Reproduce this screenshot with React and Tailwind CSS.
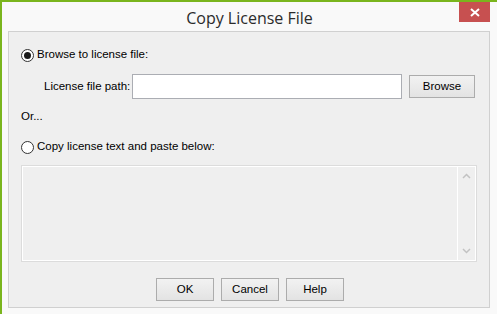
import React from "react";

function Radio({ checked, label }) {
  return (
    <div className="flex items-center h-[14px]">
      <span className="w-[13px] h-[13px] shrink-0 rounded-full border border-[#333] bg-white flex items-center justify-center">
        {checked && <span className="w-[7px] h-[7px] rounded-full bg-[#1a1a1a]" />}
      </span>
      <span className="ml-[3px] whitespace-nowrap">{label}</span>
    </div>
  );
}

function Btn({ children, w = "w-[58px]" }) {
  return (
    <button className={`${w} h-[23px] shrink-0 border border-[#acacac] bg-gradient-to-b from-[#f2f2f2] to-[#e3e3e3] text-[11.5px] text-black flex items-center justify-center`}>
      {children}
    </button>
  );
}

export default function App() {
  return (
    <div
      className="w-[497px] h-[314px] bg-[#f9f9f9] border-l-2 border-t-2 border-[#7ab51d] overflow-hidden flex flex-col"
      style={{ fontFamily: '"Liberation Sans", Arial, sans-serif' }}
    >
      <div className="h-[29px] relative flex items-center justify-center">
        <span
          className="text-[16px] text-[#2b2b2b] mt-[3px]"
          style={{ fontFamily: '"Open Sans", "Noto Sans", sans-serif' }}
        >
          Copy License File
        </span>
        <div className="absolute right-[7px] top-0 w-[31px] h-[20px] bg-[#c75050] flex items-center justify-center">
          <svg width="10" height="9" viewBox="0 0 10 9">
            <path d="M1 1 L9 8 M9 1 L1 8" stroke="#fff" strokeWidth="2" />
          </svg>
        </div>
      </div>
      <div className="ml-[6px] w-[482px] h-[277px] border border-[#d0d0d0] bg-[#efefef] pl-[12px] pr-[12px] text-[11.5px] text-black flex flex-col">
        <div className="mt-[16px]">
          <Radio checked label="Browse to license file:" />
        </div>
        <div className="mt-[12px] flex items-center h-[25px]">
          <span className="ml-[23px] w-[88px] shrink-0 whitespace-nowrap">License file path:</span>
          <div className="w-[270px] h-[25px] shrink-0 border border-[#abadb3] bg-white" />
          <div className="ml-[7px]">
            <Btn w="w-[66px]">Browse</Btn>
          </div>
        </div>
        <div className="mt-[11px] h-[14px] flex items-center">Or...</div>
        <div className="mt-[16px]">
          <Radio label="Copy license text and paste below:" />
        </div>
        <div className="mt-[11px] w-[456px] h-[97px] border border-[#dcdcdc] flex">
          <div className="flex-1 border border-white border-r-0" />
          <div className="w-[19px] border border-white flex flex-col items-center justify-between py-[6px]">
            <svg width="9" height="6" viewBox="0 0 9 6">
              <path d="M1 5 L4.5 1.5 L8 5" stroke="#c2c2c2" strokeWidth="1.5" fill="none" />
            </svg>
            <svg width="9" height="6" viewBox="0 0 9 6">
              <path d="M1 1 L4.5 4.5 L8 1" stroke="#c2c2c2" strokeWidth="1.5" fill="none" />
            </svg>
          </div>
        </div>
        <div className="mt-[16px] flex justify-center gap-[7px] pl-[2px]">
          <Btn>OK</Btn>
          <Btn>Cancel</Btn>
          <Btn>Help</Btn>
        </div>
      </div>
    </div>
  );
}
